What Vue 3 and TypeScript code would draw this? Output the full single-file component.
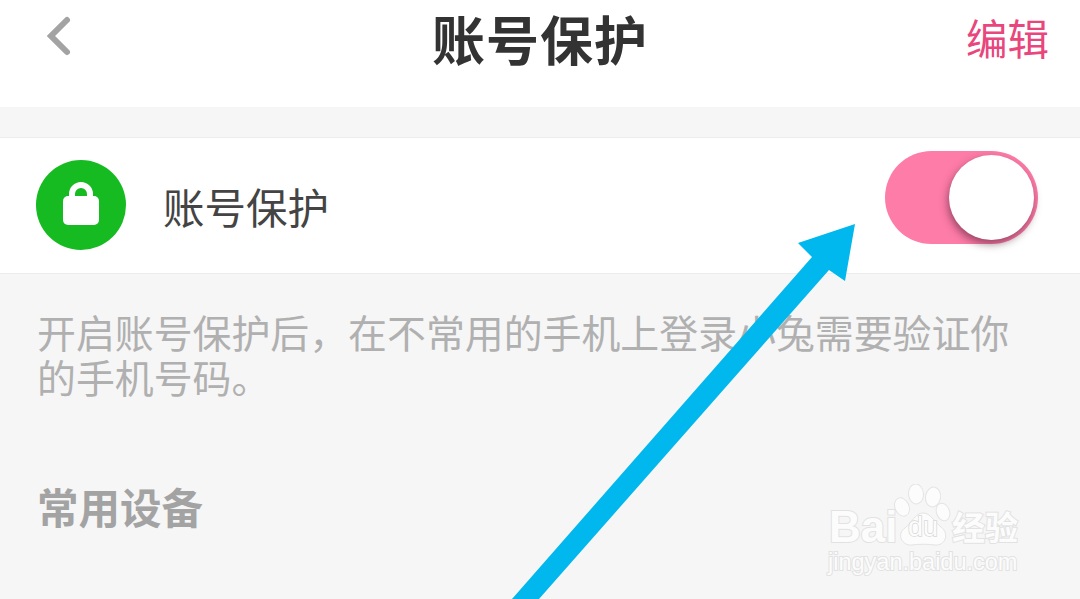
<script setup lang="ts">
</script>

<template>
  <div class="screen">
    <header class="top-bar">
      <button class="back" type="button" aria-label="返回">
        <svg width="30" height="44" viewBox="0 0 30 44">
          <path d="M23 6 L7 22 L23 38" fill="none" stroke="#a3a3a3" stroke-width="6" stroke-linecap="round" stroke-linejoin="miter" />
        </svg>
      </button>
      <h1 class="title">账号保护</h1>
      <span class="edit">编辑</span>
    </header>

    <section class="setting-row">
      <span class="lock-badge">
        <svg width="44" height="50" viewBox="0 0 44 50">
          <path d="M13 22 V14 a9 9 0 0 1 18 0 V22" fill="none" stroke="#fff" stroke-width="6" />
          <rect x="4" y="16" width="36" height="29" rx="5" fill="#fff" />
        </svg>
      </span>
      <span class="setting-label">账号保护</span>
      <span class="toggle"><span class="toggle__knob"></span></span>
    </section>

    <p class="hint">开启账号保护后，在不常用的手机上登录小兔需要验证你的手机号码。</p>
    <h2 class="section-title">常用设备</h2>

    <svg class="arrow" width="1080" height="599" viewBox="0 0 1080 599">
      <polygon points="855,224 798,243 812,257 512,599 539,599 829,270 845,281" fill="#00b7ee" />
    </svg>

    <div class="watermark">
      <svg class="watermark__paw" width="64" height="66" viewBox="0 0 64 66">
        <g fill="#fcfcfc" stroke="#e4e4e4" stroke-width="1">
          <ellipse cx="10" cy="23" rx="7" ry="9.5" transform="rotate(-25 10 23)" />
          <ellipse cx="24" cy="10" rx="7.5" ry="10" transform="rotate(-5 24 10)" />
          <ellipse cx="41" cy="13" rx="7.5" ry="10" transform="rotate(10 41 13)" />
          <ellipse cx="51" cy="28" rx="6.5" ry="9" transform="rotate(-20 51 28)" />
          <path d="M31 29 C39 29 42 38 49 43 C58 50 53 62 43 61 C36 60 27 60 20 61 C10 62 4 50 13 44 C20 39 23 29 31 29 Z" />
        </g>
      </svg>
      <span class="watermark__bai">Bai</span>
      <span class="watermark__du">du</span>
      <span class="watermark__cn">经验</span>
      <span class="watermark__url">jingyan.baidu.com</span>
    </div>
  </div>
</template>

<style scoped>
.screen {
  position: relative;
  width: 1080px;
  height: 599px;
  overflow: hidden;
  background-color: #f6f6f6;
  font-family: "Noto Sans CJK SC", "Liberation Sans", sans-serif;
}

.top-bar {
  display: grid;
  grid-template-columns: 1fr auto 1fr;
  align-items: center;
  height: 107px;
  padding: 0 31px 35px 44px;
  box-sizing: border-box;
  background-color: #fff;
}

.back {
  display: flex;
  padding: 0;
  border: none;
  background: none;
  margin-bottom: 2px;
}

.title {
  margin: 2px 0 0 -13px;
  font-size: 53px;
  font-weight: 700;
  letter-spacing: 1px;
  line-height: 72px;
  color: #333;
}

.edit {
  justify-self: end;
  margin-bottom: 1px;
  font-size: 41.5px;
  line-height: 56px;
  color: #e8467c;
}

.setting-row {
  display: flex;
  align-items: center;
  height: 137px;
  margin-top: 30px;
  padding: 0 42px 0 36px;
  box-sizing: border-box;
  background-color: #fff;
  border-top: 1px solid #ececec;
  border-bottom: 1px solid #ececec;
}

.lock-badge {
  display: flex;
  align-items: center;
  justify-content: center;
  width: 90px;
  height: 90px;
  margin-top: -1px;
  border-radius: 50%;
  background-color: #15bb21;
}

.setting-label {
  margin-left: 37px;
  font-size: 41.5px;
  line-height: 56px;
  color: #444;
}

.toggle {
  display: flex;
  justify-content: flex-end;
  align-items: center;
  width: 153px;
  height: 93px;
  margin-left: auto;
  margin-top: -17px;
  padding-right: 4px;
  box-sizing: border-box;
  border-radius: 47px;
  background-color: #fd7ca8;
}

.toggle__knob {
  width: 85px;
  height: 85px;
  border-radius: 50%;
  background-color: #fff;
  box-shadow: -1px 4px 8px rgba(70, 20, 40, 0.55);
}

.hint {
  margin: 35px 37px 0;
  font-size: 38.9px;
  line-height: 45px;
  color: #b0b0b0;
}

.section-title {
  margin: 79px 37px 0;
  font-size: 41.5px;
  font-weight: 700;
  line-height: 56px;
  color: #a3a3a3;
}

.arrow {
  position: absolute;
  top: 0;
  left: 0;
}

.watermark {
  position: absolute;
  top: 0;
  left: 0;
  width: 1080px;
  height: 599px;
  font-family: "Liberation Sans", "Noto Sans CJK SC", sans-serif;
  color: #fcfcfc;
}

.watermark span {
  position: absolute;
  -webkit-text-stroke: 2px #e2e2e2;
  paint-order: stroke fill;
  line-height: 1;
}

.watermark__paw {
  position: absolute;
  left: 892px;
  top: 484px;
}

.watermark__bai {
  left: 829px;
  top: 505px;
  font-size: 44px;
  font-weight: 700;
}

.watermark .watermark__du {
  left: 908px;
  top: 514px;
  font-size: 27px;
  color: #fcfcfc;
  -webkit-text-stroke: 1.5px #d8d8d8;
}

.watermark__cn {
  left: 952px;
  top: 510px;
  font-family: "Noto Sans CJK SC", sans-serif;
  font-size: 33px;
  font-weight: 700;
}

.watermark__url {
  left: 828px;
  top: 551px;
  font-size: 23.5px;
}
</style>
